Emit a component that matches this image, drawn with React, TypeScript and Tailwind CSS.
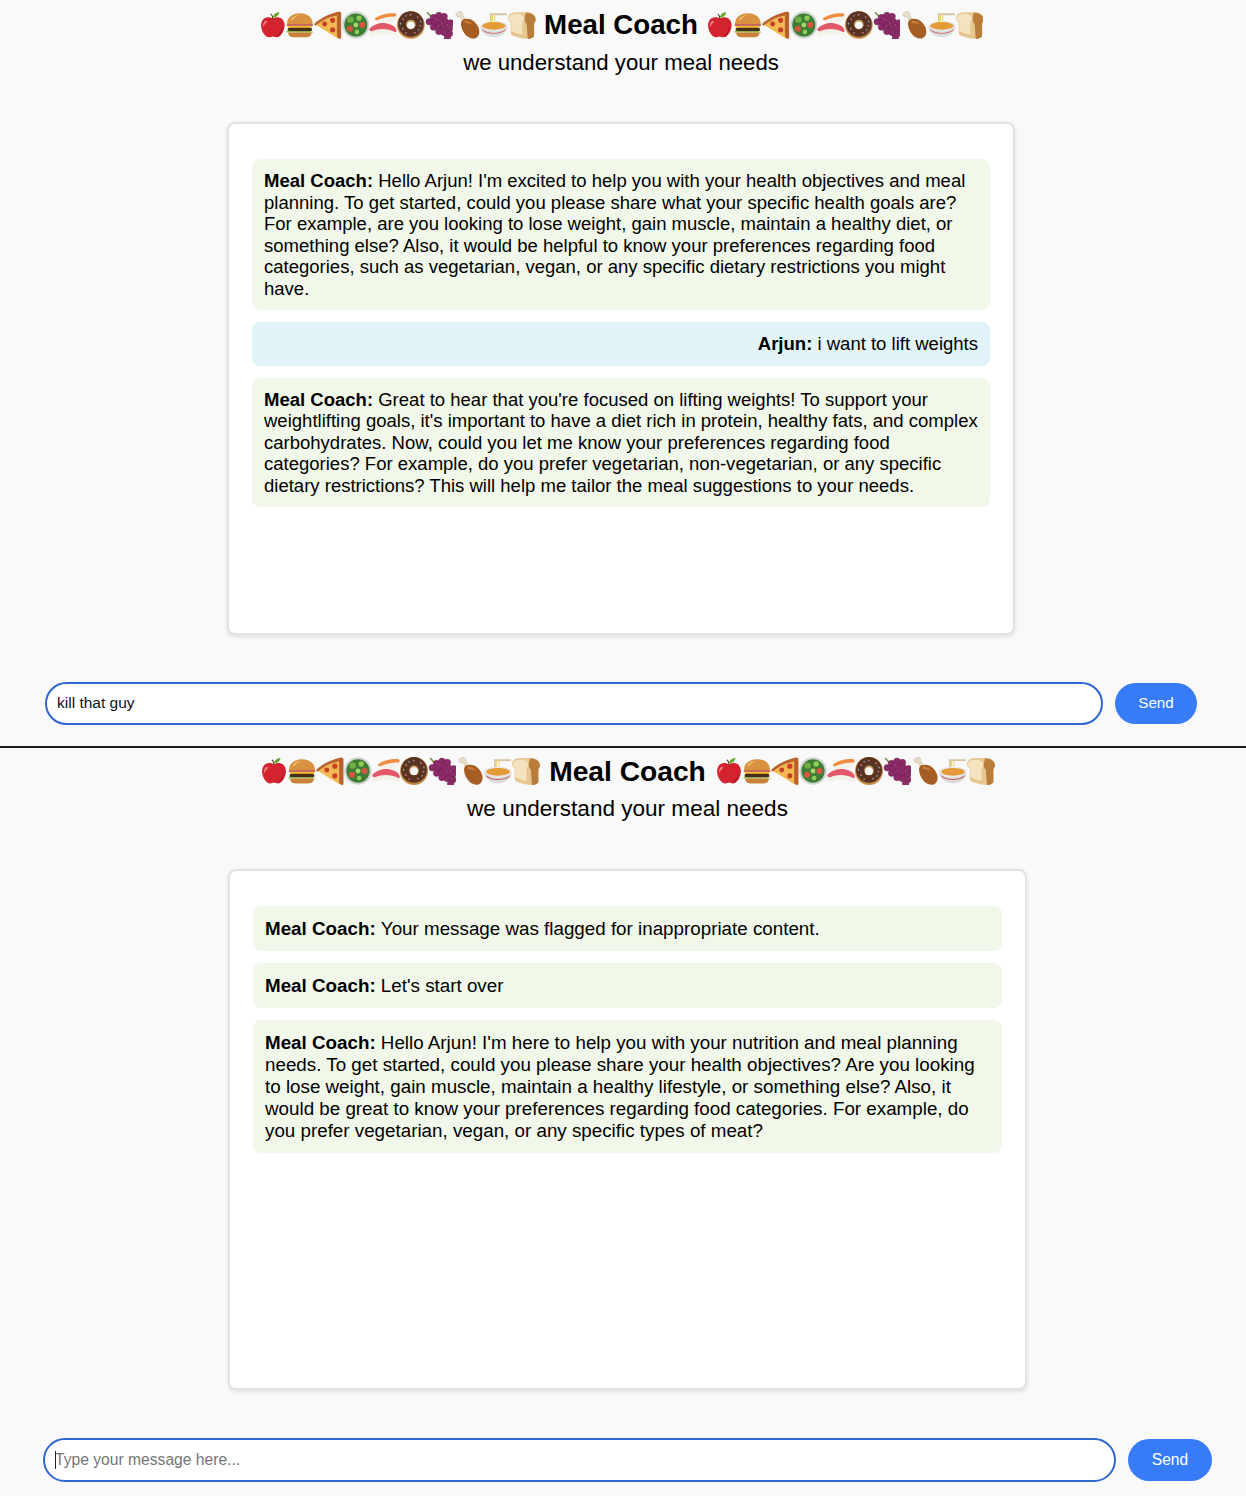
import type { ReactNode } from 'react';

const emojis: ReactNode[] = [
  // apple
  <>
    <path d="M14 8c-3-2.500-10-2-11 5-.6 5 3 12 7 12.500 2 .2 2.500-.8 4-.8s2 1 4 .8c4-.5 7.600-7.500 7-12.500-1-7-8-7.500-11-5z" fill="#d3232e" />
    <path d="M18 24c3-2 5-6 5-10 1 5-2 9-4 11z" fill="#a31621" />
    <path d="M7 10c-2 1-2.500 4-2 6 1-2 2-4 4-5z" fill="#f2858a" />
    <path d="M14 8.500c0-2-.6-4-2-5" stroke="#5b3a1e" strokeWidth="1" fill="none" />
    <path d="M14 7c.5-3 3-5 6-5-.3 3-3 5-6 5z" fill="#5fa829" />
  </>,
  // burger
  <>
    <path d="M2 13c0-7 6-10 12-10s12 3 12 10z" fill="#d9923f" />
    <path d="M5 9c2-3 5-4 8-4.500-3 1.500-5 3-6 5z" fill="#efc07c" />
    <rect x="1.500" y="13" width="25" height="2" rx="1" fill="#c8695f" />
    <path d="M2 15h24l-2 2.500H4z" fill="#f2c230" />
    <rect x="2.500" y="16.500" width="23" height="3.500" rx="1.700" fill="#4a2c1a" />
    <path d="M1.500 20c3-1.500 5 1 8 0s6 1 9 0 6 1 8 0v1H1.500z" fill="#84bf3a" />
    <path d="M3 21h22c0 3-2 4.500-5 4.500H8c-3 0-5-1.500-5-4.500z" fill="#c9813a" />
  </>,
  // pizza
  <>
    <path d="M1.500 13 24 3.500V27z" fill="#f2b851" />
    <path d="M1.500 12.500C8 7 15 3.500 24 1.500c1.500-.3 2.500.5 2.500 2v22c0 1.500-1.500 2-2.500 1L22.500 25V5C15 6.500 8 10 2.500 14.500c-1 0-1.500-1-1-2z" fill="#b9622b" />
    <circle cx="11" cy="13" r="2.300" fill="#c8402c" />
    <circle cx="18.500" cy="9.500" r="2.400" fill="#c8402c" />
    <circle cx="18.500" cy="18.500" r="2.400" fill="#c8402c" />
  </>,
  // salad
  <>
    <circle cx="14" cy="14" r="12.800" fill="#cfd6d2" />
    <circle cx="14" cy="14" r="10.800" fill="#3f7c34" />
    <circle cx="9" cy="9" r="3" fill="#6fb044" />
    <circle cx="17" cy="7.500" r="2.500" fill="#8ecb57" />
    <circle cx="14" cy="14" r="2.300" fill="#a5d66a" />
    <circle cx="8.500" cy="17.500" r="2.800" fill="#d8553f" />
    <circle cx="20" cy="14" r="2.800" fill="#d8553f" />
    <circle cx="15" cy="20.500" r="2.200" fill="#8ecb57" />
  </>,
  // sushi
  <>
    <path d="M8 8.500C13 5 20 4 26 5c1.500 2 1 5-.5 5.500-5 .5-11 1-16.500 2.500-2-.5-2.500-3-1-4.500z" fill="#f3f2ea" />
    <path d="M7 7.500C12 4 19 2.500 25.500 3c1.500.5 1.500 2.500.5 3C19 6 13 7.500 8.500 9.500c-1.500 0-2.500-1-1.500-2z" fill="#f08a3e" />
    <path d="M1 20c4-6 12-7.500 18-6.500 4 .6 8 3.500 8 7 .2 2.500-1 3.500-3 3-6-1.500-13-1.500-20 .5-3 .5-4-1.500-3-4z" fill="#f3f2ea" />
    <path d="M1.500 17.500c4-4.500 11-6 16.500-5 4.500.8 8.500 3.500 8.800 6.500.2 1.500-1 1.800-2 1.300-6-3-14-3.500-21-.5-1.800.5-3-1-2.300-2.300z" fill="#e4586a" />
  </>,
  // donut
  <>
    <circle cx="14" cy="14" r="13" fill="#c38a45" />
    <circle cx="14" cy="13" r="12" fill="#5a3422" />
    <circle cx="14" cy="13.500" r="4.500" fill="#c7a06a" />
    <circle cx="14" cy="14.200" r="3.600" fill="#f9f9f9" />
    <path d="M6 8l1.500 1M20 6l1 1.500M22 15l1.500-.5M6 17l1 1.500M13 4.500h1.500M17 21l1.500.5M10 21l-1 1" stroke="#e98aa5" strokeWidth="1" />
    <path d="M9 6l1-1M23 10l.5 1.500M4 12l.5 1.500M21 19l1-1" stroke="#8cc7d8" strokeWidth="1" />
  </>,
  // grapes
  <>
    <path d="M3 2c1 1 3 3 4 5" stroke="#6c8a2e" strokeWidth="1.300" fill="none" />
    {[[9, 7], [14, 5], [19, 6], [5, 11], [10, 12], [15, 10], [20, 11], [25, 12], [9, 16], [14, 15], [19, 16], [24, 17], [14, 20], [19, 21], [24, 22], [22, 26]].map(([cx, cy]) => (
      <circle key={`${cx}-${cy}`} cx={cx} cy={cy} r="3" fill="#8c2b67" stroke="#6f1f50" strokeWidth=".5" />
    ))}
  </>,
  // drumstick
  <>
    <path d="M6 2c1-1.500 2.500-1 3 0 1 .3 1.500 1.500 1 2.500l3 5-2.500 1.500-3-5C6 6.500 4 6 4 4.500 3 4 4.500 2 6 2z" fill="#e8ddc8" stroke="#b5a58a" strokeWidth=".4" />
    <path d="M10 9c4-2 10-.5 13 4 3.500 4.500 3.500 10 .5 12.500-3 2.500-9 1-12-4-2.500-4-4.500-9.500-1.500-12.500z" fill="#a65d23" />
    <path d="M12 10c3 0 6 1 8 4-2-1-6-2-8-2z" fill="#c98544" />
  </>,
  // soup
  <>
    <path d="M10 3h16v1.800H12v9h-1.600V4.500z" fill="#d6c4a0" />
    <path d="M12 4h1.200v10H12zM14.300 4h1v10h-1z" fill="#f1d776" />
    <ellipse cx="14" cy="15" rx="13" ry="5" fill="#e8e8e6" />
    <ellipse cx="14" cy="14.800" rx="11" ry="3.600" fill="#e59a3a" />
    <path d="M1 15.500c1 6 6.500 10 13 10s12-4 13-10c-3 3-7.500 4.500-13 4.500S4 18.500 1 15.500z" fill="#d9dcdc" />
    <path d="M3 18c3 2.500 7 3.500 11 3.500s8-1 11-3.500l-.6 1.500c-3 2-6.400 2.800-10.400 2.800s-7.400-.8-10.400-2.800z" fill="#d3565a" />
  </>,
  // bread
  <>
    <path d="M1 8c0-4 3-6 8-6h10c5 0 8 3 8 6.500 0 2-1 3-1.500 4V24c0 1.500-3 3-6 3-4 0-8-1-11-2-2-.5-5-1.500-5-3V12C3 11 1 10 1 8z" fill="#e7c791" />
    <path d="M18 2.500c5 0 8.500 2.500 9 6 0 2-1 3-1.500 4V24c0 1.500-3 3-6 3l-1-14c-1-1.500-2-2.500-2-4.500 0-2 1-5 1.500-6z" fill="#b87d3a" />
    <path d="M1.500 8.500C2 5 5 3.500 9 3.500c4 0 7 2 7 4.500 0 1.500-1 3-1.500 4v11c-3-.5-8-2-10.500-3.500V11.500c-1-.6-2.500-2-2.500-3z" fill="#f5e3bf" />
  </>,
];

function EmojiRow({ cellClass }: { cellClass: string }) {
  return (
    <span className="flex shrink-0">
      {emojis.map((e, i) => (
        <svg key={i} viewBox="1 1 26 26" className={cellClass}>
          {e}
        </svg>
      ))}
    </span>
  );
}

function Bubble({ who, lines, user, className }: { who: string; lines: string[]; user?: boolean; className: string }) {
  return (
    <div className={`rounded-[8px] px-3 text-black ${user ? 'bg-[#e3f4f9] text-right' : 'bg-[#f1f8ea]'} ${className}`}>
      {lines.map((line, i) => (
        <div key={i} className="whitespace-nowrap">
          {i === 0 && <b className="font-bold">{who}: </b>}
          {line}
        </div>
      ))}
    </div>
  );
}

const firstChat = [
  {
    who: 'Meal Coach',
    lines: [
      "Hello Arjun! I'm excited to help you with your health objectives and meal",
      'planning. To get started, could you please share what your specific health goals are?',
      'For example, are you looking to lose weight, gain muscle, maintain a healthy diet, or',
      'something else? Also, it would be helpful to know your preferences regarding food',
      'categories, such as vegetarian, vegan, or any specific dietary restrictions you might',
      'have.',
    ],
  },
  { who: 'Arjun', lines: ['i want to lift weights'], user: true },
  {
    who: 'Meal Coach',
    lines: [
      "Great to hear that you're focused on lifting weights! To support your",
      "weightlifting goals, it's important to have a diet rich in protein, healthy fats, and complex",
      'carbohydrates. Now, could you let me know your preferences regarding food',
      'categories? For example, do you prefer vegetarian, non-vegetarian, or any specific',
      'dietary restrictions? This will help me tailor the meal suggestions to your needs.',
    ],
  },
];

const secondChat = [
  { who: 'Meal Coach', lines: ['Your message was flagged for inappropriate content.'] },
  { who: 'Meal Coach', lines: ["Let's start over"] },
  {
    who: 'Meal Coach',
    lines: [
      "Hello Arjun! I'm here to help you with your nutrition and meal planning",
      'needs. To get started, could you please share your health objectives? Are you looking',
      'to lose weight, gain muscle, maintain a healthy lifestyle, or something else? Also, it',
      'would be great to know your preferences regarding food categories. For example, do',
      'you prefer vegetarian, vegan, or any specific types of meat?',
    ],
  },
];

export default function App() {
  return (
    <div className="h-[1496px] w-[1246px] overflow-hidden bg-[#f9f9f9] font-['Liberation_Sans',Arial,sans-serif] text-black">
      {/* first screenshot */}
      <section className="flex h-[746px] w-[1242px] flex-col items-center pt-[11px]">
        <h1 className="flex h-[28px] items-center gap-[8.5px] text-[27.7px] font-bold leading-[28px]">
          <EmojiRow cellClass="h-[28px] w-[27.7px]" />
          <span>Meal Coach</span>
          <EmojiRow cellClass="h-[28px] w-[27.7px]" />
        </h1>
        <p className="mt-[11px] text-[22.2px] leading-[25px]">we understand your meal needs</p>
        <div className="mt-[47px] flex h-[513px] w-[788px] flex-col gap-[12px] rounded-[8px] border-2 border-[#e2e2e2] bg-white px-[23px] pt-[35px] text-[18.53px] leading-[21.5px] shadow-[0_2px_4px_rgba(0,0,0,0.1)]">
          {firstChat.map((m, i) => (
            <Bubble key={i} who={m.who} lines={m.lines} user={m.user} className="py-[11px]" />
          ))}
        </div>
        <div className="mt-[47px] flex w-[1152px] items-center gap-[12px]">
          <input
            readOnly
            value="kill that guy"
            className="h-[43px] w-[1058px] rounded-[22px] border-2 border-[#2f66cf] bg-white px-[10px] pb-[1px] text-[15.5px] text-[#111] outline-none"
          />
          <button className="h-[41px] w-[82px] rounded-[21px] bg-[#377cf6] text-[15.2px] text-white">Send</button>
        </div>
      </section>

      <div className="h-[2px] bg-[#1a1a1a]" />

      {/* second screenshot */}
      <section className="flex h-[748px] w-[1255px] flex-col items-center pt-[9px]">
        <h1 className="flex h-[28px] items-center gap-[9px] text-[28.2px] font-bold leading-[28px]">
          <EmojiRow cellClass="h-[28px] w-[28px]" />
          <span>Meal Coach</span>
          <EmojiRow cellClass="h-[28px] w-[28px]" />
        </h1>
        <p className="mt-[11px] text-[22.55px] leading-[26px]">we understand your meal needs</p>
        <div className="mt-[47px] flex h-[521px] w-[799px] flex-col gap-[12px] rounded-[8px] border-2 border-[#e2e2e2] bg-white px-[23px] pt-[35px] text-[18.79px] leading-[22px] shadow-[0_2px_4px_rgba(0,0,0,0.1)]">
          {secondChat.map((m, i) => (
            <Bubble key={i} who={m.who} lines={m.lines} className="py-[11.5px]" />
          ))}
        </div>
        <div className="mt-[48px] flex w-[1169px] items-center gap-[12px]">
          <div className="relative">
            <input
              readOnly
              placeholder="Type your message here..."
              className="block h-[44px] w-[1073px] rounded-[22px] border-2 border-[#2f66cf] bg-white px-[10px] text-[15.65px] outline-none placeholder:text-[#757575]"
            />
            <span className="absolute left-[12px] top-[13px] h-[18px] w-px bg-[#222]" />
          </div>
          <button className="h-[42px] w-[84px] rounded-[21px] bg-[#377cf6] text-[15.6px] text-white">Send</button>
        </div>
      </section>
    </div>
  );
}
